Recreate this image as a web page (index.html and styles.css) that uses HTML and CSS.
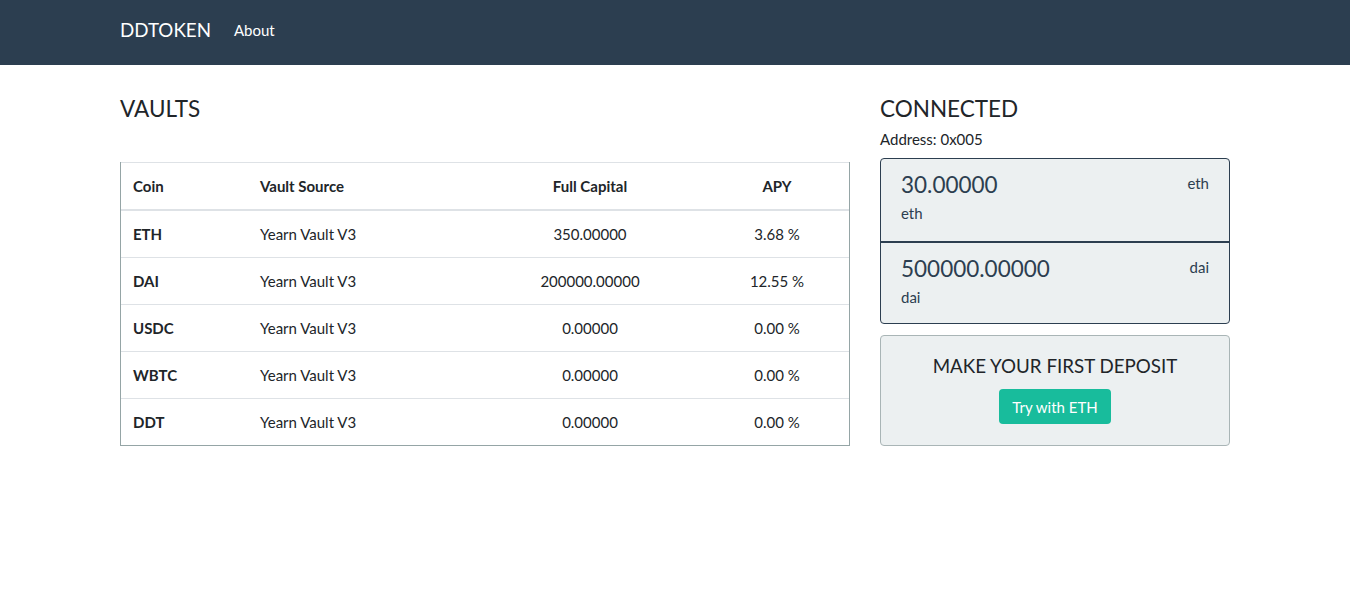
FILE: index.html
```html
<!DOCTYPE html>
<html>
<head>
<meta charset="utf-8">
<link rel="stylesheet" href="styles.css">
</head>
<body>
<nav class="navbar">
  <div class="container nav-inner">
    <a class="brand">DDTOKEN</a>
    <a class="nav-link">About</a>
  </div>
</nav>
<main class="container row">
  <section class="col-left">
    <h4 class="heading">VAULTS</h4>
    <div class="table-wrap">
      <table class="vaults">
        <thead>
          <tr>
            <th class="c1">Coin</th>
            <th class="c2">Vault Source</th>
            <th class="c3 center">Full Capital</th>
            <th class="c4 center">APY</th>
          </tr>
        </thead>
        <tbody>
          <tr><th>ETH</th><td>Yearn Vault V3</td><td class="center">350.00000</td><td class="center">3.68 %</td></tr>
          <tr><th>DAI</th><td>Yearn Vault V3</td><td class="center">200000.00000</td><td class="center">12.55 %</td></tr>
          <tr><th>USDC</th><td>Yearn Vault V3</td><td class="center">0.00000</td><td class="center">0.00 %</td></tr>
          <tr><th>WBTC</th><td>Yearn Vault V3</td><td class="center">0.00000</td><td class="center">0.00 %</td></tr>
          <tr><th>DDT</th><td>Yearn Vault V3</td><td class="center">0.00000</td><td class="center">0.00 %</td></tr>
        </tbody>
      </table>
    </div>
  </section>
  <aside class="col-right">
    <h4 class="heading">CONNECTED</h4>
    <p class="address">Address: 0x005</p>
    <ul class="balances">
      <li class="balance">
        <div class="balance-top">
          <span class="amount">30.00000</span>
          <span class="unit-right">eth</span>
        </div>
        <div class="unit">eth</div>
      </li>
      <li class="balance">
        <div class="balance-top">
          <span class="amount">500000.00000</span>
          <span class="unit-right">dai</span>
        </div>
        <div class="unit">dai</div>
      </li>
    </ul>
    <div class="deposit">
      <h5 class="deposit-title">MAKE YOUR FIRST DEPOSIT</h5>
      <button class="btn">Try with ETH</button>
    </div>
  </aside>
</main>
</body>
</html>
```
FILE: styles.css
```css
* { box-sizing: border-box; }
html, body { margin: 0; padding: 0; }
body {
  font-family: Lato, "Open Sans", "Liberation Sans", sans-serif;
  font-size: 15px;
  line-height: 1.5;
  color: #212529;
  background: #fff;
}
.container {
  width: 1140px;
  margin: 0 auto;
  padding: 0 15px;
}
.navbar {
  background: #2c3e50;
  height: 65px;
}
.nav-inner {
  display: flex;
  align-items: center;
  height: 65px;
  padding-bottom: 4px;
}
.brand {
  color: #fff;
  font-size: 18.75px;
  margin-right: 23px;
}
.nav-link {
  color: #fff;
  font-size: 15px;
}
.row {
  display: flex;
  gap: 30px;
  padding-top: 30px;
}
.col-left { width: 730px; }
.col-right { width: 350px; }
.heading {
  margin: 0;
  font-size: 22.5px;
  font-weight: 400;
  line-height: 27px;
  color: #212529;
}
.col-left .heading { margin-bottom: 40px; }
.table-wrap {
  border: 1px solid #95a5a6;
  border-top: none;
}
.vaults {
  width: 100%;
  border-collapse: collapse;
  table-layout: fixed;
}
.vaults th, .vaults td {
  padding: 12px;
  text-align: left;
  border-top: 1px solid #dee2e6;
  line-height: 22px;
  vertical-align: top;
}
.vaults th { font-weight: 700; }
.vaults thead th {
  border-bottom: 2px solid #dee2e6;
}
.vaults tbody tr:first-child th, .vaults tbody tr:first-child td { border-top: none; }
.vaults .c1 { width: 127px; }
.vaults .c2 { width: 227px; }
.vaults .c3 { width: 230px; }
.vaults .center { text-align: center; }
.address {
  margin: 7px 0 9px;
  font-size: 15px;
  line-height: 20px;
}
.balances {
  list-style: none;
  margin: 0;
  padding: 0;
  border: 1px solid #2c3e50;
  border-radius: 4px;
  background: #ecf0f1;
  overflow: hidden;
}
.balance {
  padding: 13px 20px 0;
  height: 82px;
}
.balance + .balance { border-top: 2px solid #2c3e50; height: 82px; }
.balance-top {
  display: flex;
  justify-content: space-between;
  align-items: flex-start;
}
.amount {
  font-size: 22.5px;
  line-height: 26px;
  color: #2c3e50;
}
.unit-right {
  font-size: 15px;
  line-height: 22px;
  color: #2c3e50;
}
.unit {
  margin-top: 4px;
  font-size: 15px;
  line-height: 22px;
  color: #2c3e50;
}
.deposit {
  margin-top: 11px;
  background: #ecf0f1;
  border: 1px solid #a9b5b6;
  border-radius: 4px;
  height: 111px;
  text-align: center;
  padding-top: 19px;
}
.deposit-title {
  margin: 0 0 12px;
  font-size: 18.75px;
  font-weight: 400;
  line-height: 22px;
  color: #212529;
}
.btn {
  font-family: inherit;
  background: #18bc9c;
  color: #fff;
  border: none;
  border-radius: 4px;
  font-size: 15px;
  line-height: 22px;
  padding: 6px 13px;
  height: 35px;
}
```
